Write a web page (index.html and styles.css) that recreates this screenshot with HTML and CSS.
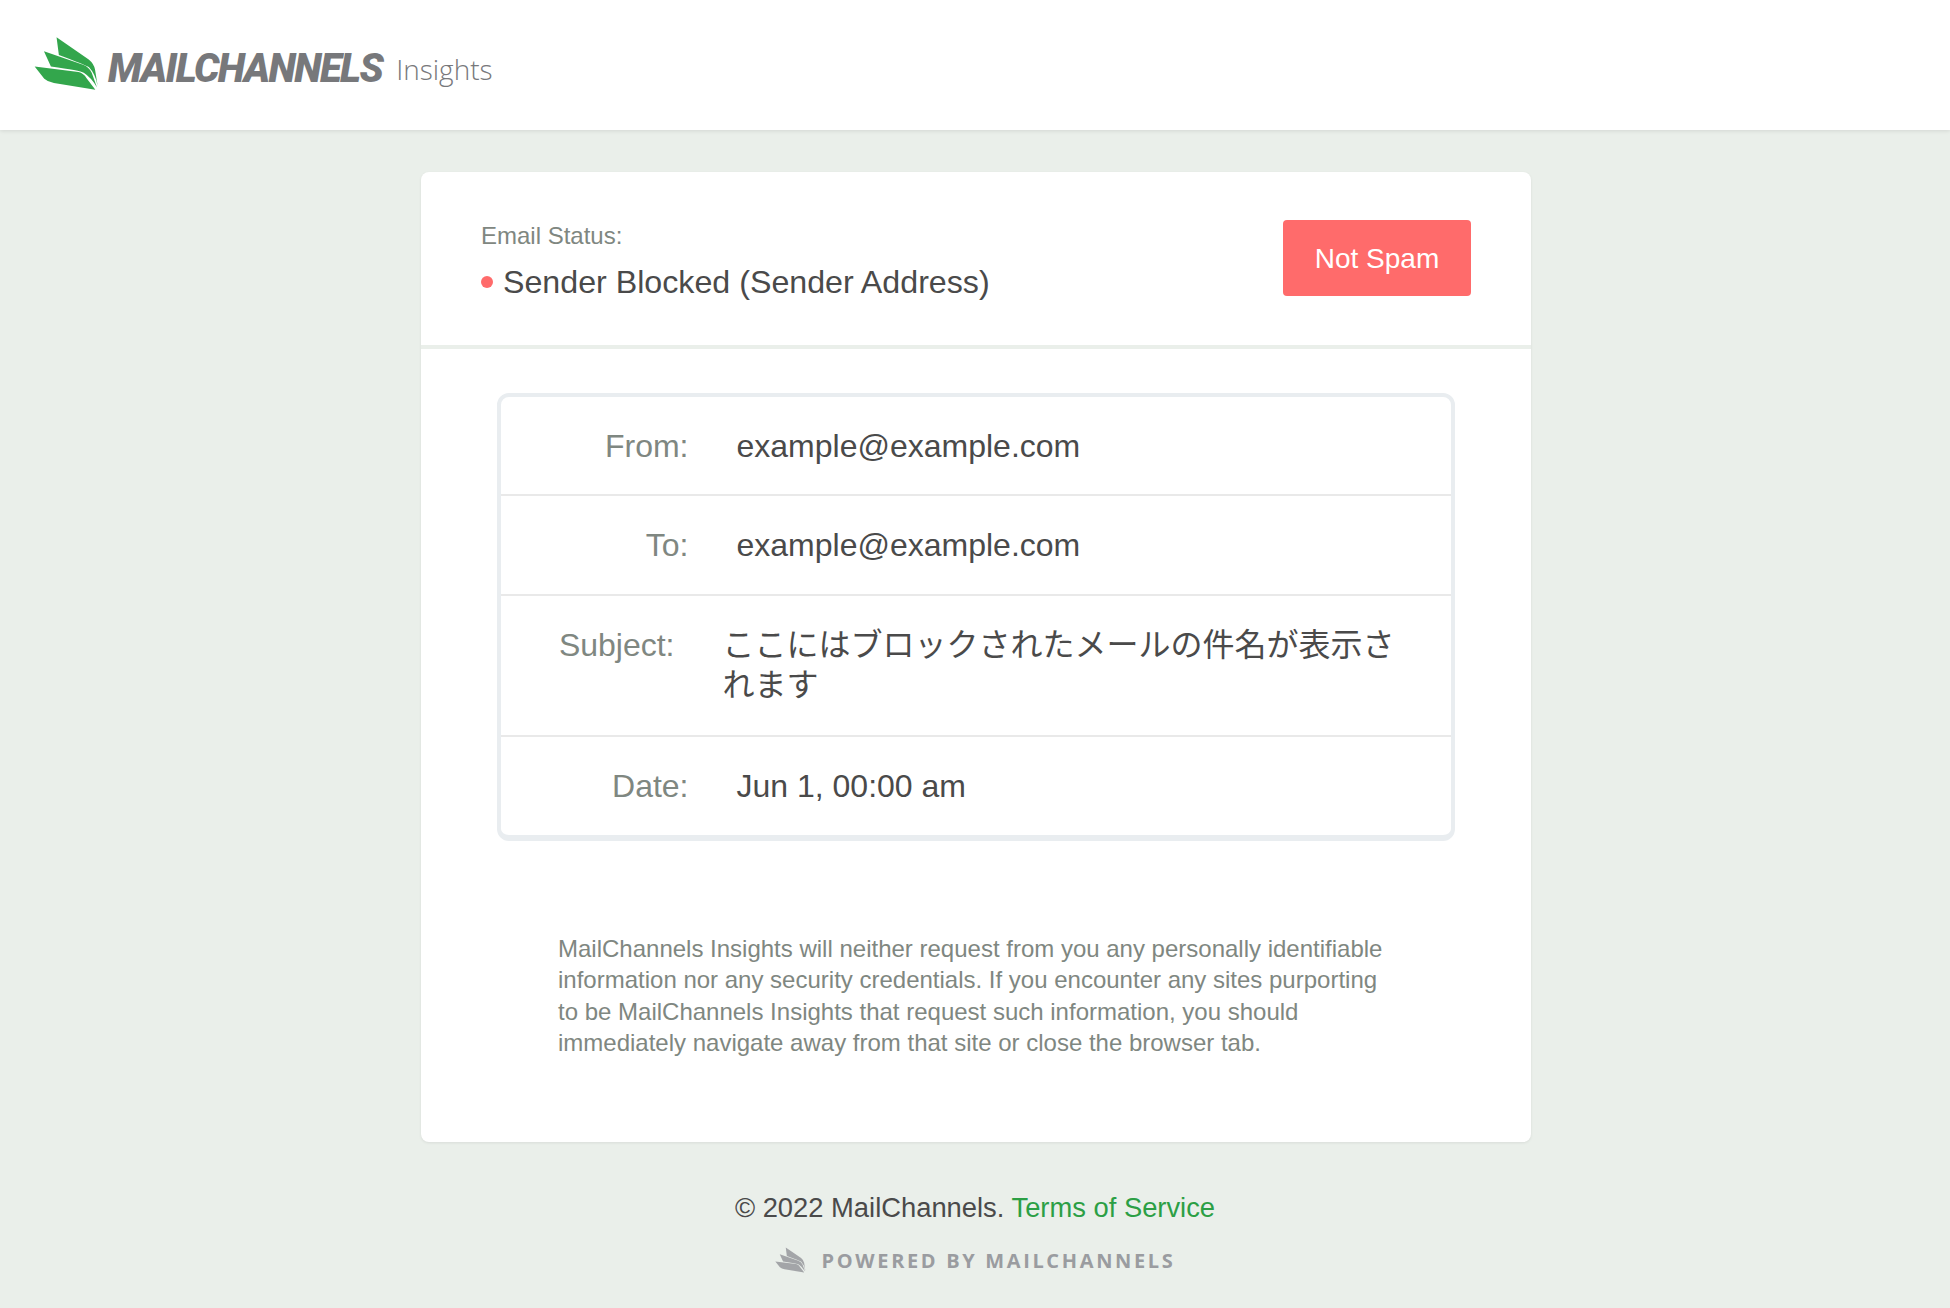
FILE: index.html
```html
<!DOCTYPE html>
<html lang="en">
<head>
<meta charset="utf-8">
<title>MailChannels Insights</title>
<link rel="stylesheet" href="styles.css">
</head>
<body>
<svg class="defs" width="0" height="0" aria-hidden="true">
  <symbol id="wing" viewBox="100 112 196 164">
    <path d="M168 115 L265 182 Q280 194 284 212 L292 262 Q286 226 266 205 Q256 198 175 168 Z"/>
    <path d="M130 157 L248 198 Q266 205 274 222 L290 266 Q272 236 250 222 Q240 215 151 203 Z"/>
    <path d="M102 203 L234 220 Q250 224 258 238 L285 273 L160 253 Q142 250 131 240 Z"/>
  </symbol>
</svg>
<header class="topbar">
  <svg class="logo-mark"><use href="#wing"/></svg>
  <span class="logo-name">MAILCHANNELS</span>
  <span class="logo-product">Insights</span>
</header>
<main class="card">
  <section class="status">
    <div>
      <div class="status-label">Email Status:</div>
      <div class="status-value"><span class="dot"></span>Sender Blocked (Sender Address)</div>
    </div>
    <button class="btn" type="button">Not Spam</button>
  </section>
  <section class="body">
    <div class="details">
      <div class="row row-first"><div class="key">From:</div><div class="val">example@example.com</div></div>
      <div class="row"><div class="key">To:</div><div class="val">example@example.com</div></div>
      <div class="row row-long"><div class="key">Subject:</div><div class="val">ここにはブロックされたメールの件名が表示されます</div></div>
      <div class="row"><div class="key">Date:</div><div class="val">Jun 1, 00:00 am</div></div>
    </div>
    <p class="notice">MailChannels Insights will neither request from you any personally identifiable information nor any security credentials. If you encounter any sites purporting to be MailChannels Insights that request such information, you should immediately navigate away from that site or close the browser tab.</p>
  </section>
</main>
<footer class="foot">
  <div class="copy">© 2022 MailChannels. <a href="#">Terms of Service</a></div>
  <div class="powered"><svg class="powered-mark"><use href="#wing"/></svg><span>POWERED BY MAILCHANNELS</span></div>
</footer>
</body>
</html>
```
FILE: styles.css
```css
* { box-sizing: border-box; }
html, body { margin: 0; height: 100%; }
body {
  background: #eaefea;
  color: #4a4a4a;
  font-family: "Liberation Sans", "Noto Sans CJK JP", sans-serif;
  overflow: hidden;
}
.defs { position: absolute; }
.topbar {
  height: 130px;
  background: #fff;
  box-shadow: 0 1px 4px rgba(0,0,0,.1);
  display: flex;
  align-items: center;
  padding: 8px 0 0 34px;
}
.logo-mark { width: 65px; height: 55px; fill: #33a64c; margin: 0 9px 12px 0; }
.logo-name {
  font-family: "Roboto", sans-serif;
  font-weight: 900;
  font-style: italic;
  font-size: 40px;
  letter-spacing: -1.6px;
  color: #77787b;
  line-height: 1;
}
.logo-product {
  font-family: "Open Sans", sans-serif;
  font-weight: 300;
  font-size: 28px;
  color: #77787b;
  margin-left: 14px;
  line-height: 1;
}
.card {
  width: 1110px;
  margin: 42px 0 0 421px;
  background: #fff;
  border-radius: 8px;
  box-shadow: 0 1px 3px rgba(0,0,0,.08);
  height: 970px;
}
.status {
  height: 177px;
  padding: 48px 60px 0;
  border-bottom: 4px solid #eaefea;
  display: flex;
  justify-content: space-between;
  align-items: flex-start;
}
.status-label { font-size: 24px; line-height: 32px; color: #7f8781; }
.status-value { font-size: 32.2px; line-height: 40px; margin-top: 10px; display: flex; align-items: center; }
.dot { width: 12px; height: 12px; border-radius: 50%; background: #ff6b6b; margin-right: 10px; }
.btn {
  width: 188px;
  height: 76px;
  border: 0;
  border-radius: 4px;
  background: #ff6b6b;
  color: #fff;
  font: 28px "Liberation Sans", sans-serif;
  padding: 1px 0 0;
}
.body { padding: 44px 76px 0; }
.details {
  border: 4px solid #e9edf0;
  border-bottom-width: 6px;
  border-radius: 12px;
}
.row {
  display: flex;
  min-height: 98px;
  padding: 29px 0;
  border-bottom: 2px solid #e9e9e9;
  font-size: 32px;
  line-height: 40px;
}
.row-first { padding-bottom: 28px; }
.row:last-child { border-bottom: 0; }
.key { width: 187.5px; flex: none; text-align: right; color: #7f8781; }
.val { margin-left: 48px; flex: 1; }
.row-long { padding-bottom: 30px; }
.row-long .key { width: 173.5px; }
.row-long .val { padding-right: 46px; }
.notice {
  margin: 92px 0 0 61px;
  width: 830px;
  font-size: 24px;
  line-height: 31.4px;
  color: #7f8781;
}
.foot { text-align: center; padding-top: 48px; }
.copy { font-size: 27.35px; line-height: 36px; }
.copy a { color: #2c9f45; text-decoration: none; }
.powered {
  display: flex;
  justify-content: center;
  align-items: center;
  margin-top: 20px;
  font-family: "Open Sans", sans-serif;
  font-weight: 700;
  font-size: 20px;
  letter-spacing: 2.65px;
  color: #9a9ca0;
}
.powered-mark { width: 31px; height: 28px; fill: #a3a5a8; margin-right: 16px; }
```
